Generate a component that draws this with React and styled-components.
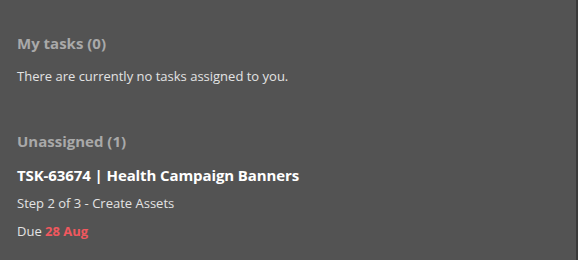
import React from 'react';
import styled, { createGlobalStyle } from 'styled-components';

const GlobalStyle = createGlobalStyle`
  html, body {
    margin: 0;
    padding: 0;
    background: #535353;
  }
  body {
    font-family: "Open Sans", "Noto Sans", sans-serif;
  }
`;

const Panel = styled.div`
  width: 578px;
  height: 260px;
  box-sizing: border-box;
  background: #535353;
  border-right: 2px solid #3a3a3a;
  padding: 32px 17px 0;
  display: flex;
  flex-direction: column;
  gap: 44px;
`;

const Section = styled.section`
  display: flex;
  flex-direction: column;
`;

const Heading = styled.h2`
  margin: 0 0 12px;
  font-size: 15px;
  line-height: 22px;
  font-weight: 700;
  color: #a9a9a9;
`;

const Text = styled.div`
  margin: ${(props) => (props.spaced ? '8px 0 0' : '0')};
  font-size: 13px;
  line-height: 20px;
  color: #e3e3e3;
`;

const TaskTitle = styled.div`
  font-size: 15px;
  line-height: 22px;
  font-weight: 700;
  letter-spacing: -0.1px;
  color: #ffffff;
  margin-bottom: 7px;
`;

const DueDate = styled.span`
  color: #f0585e;
  font-weight: 700;
`;

const tasks = [
  {
    id: 'TSK-63674',
    name: 'Health Campaign Banners',
    step: 'Step 2 of 3 - Create Assets',
    due: '28 Aug',
  },
];

function App() {
  return (
    <>
      <GlobalStyle />
      <Panel>
        <Section>
          <Heading>My tasks (0)</Heading>
          <Text>There are currently no tasks assigned to you.</Text>
        </Section>
        <Section>
          <Heading>Unassigned ({tasks.length})</Heading>
          {tasks.map((t) => (
            <div key={t.id}>
              <TaskTitle>
                {t.id} | {t.name}
              </TaskTitle>
              <Text>{t.step}</Text>
              <Text spaced>
                Due <DueDate>{t.due}</DueDate>
              </Text>
            </div>
          ))}
        </Section>
      </Panel>
    </>
  );
}

export default App;
